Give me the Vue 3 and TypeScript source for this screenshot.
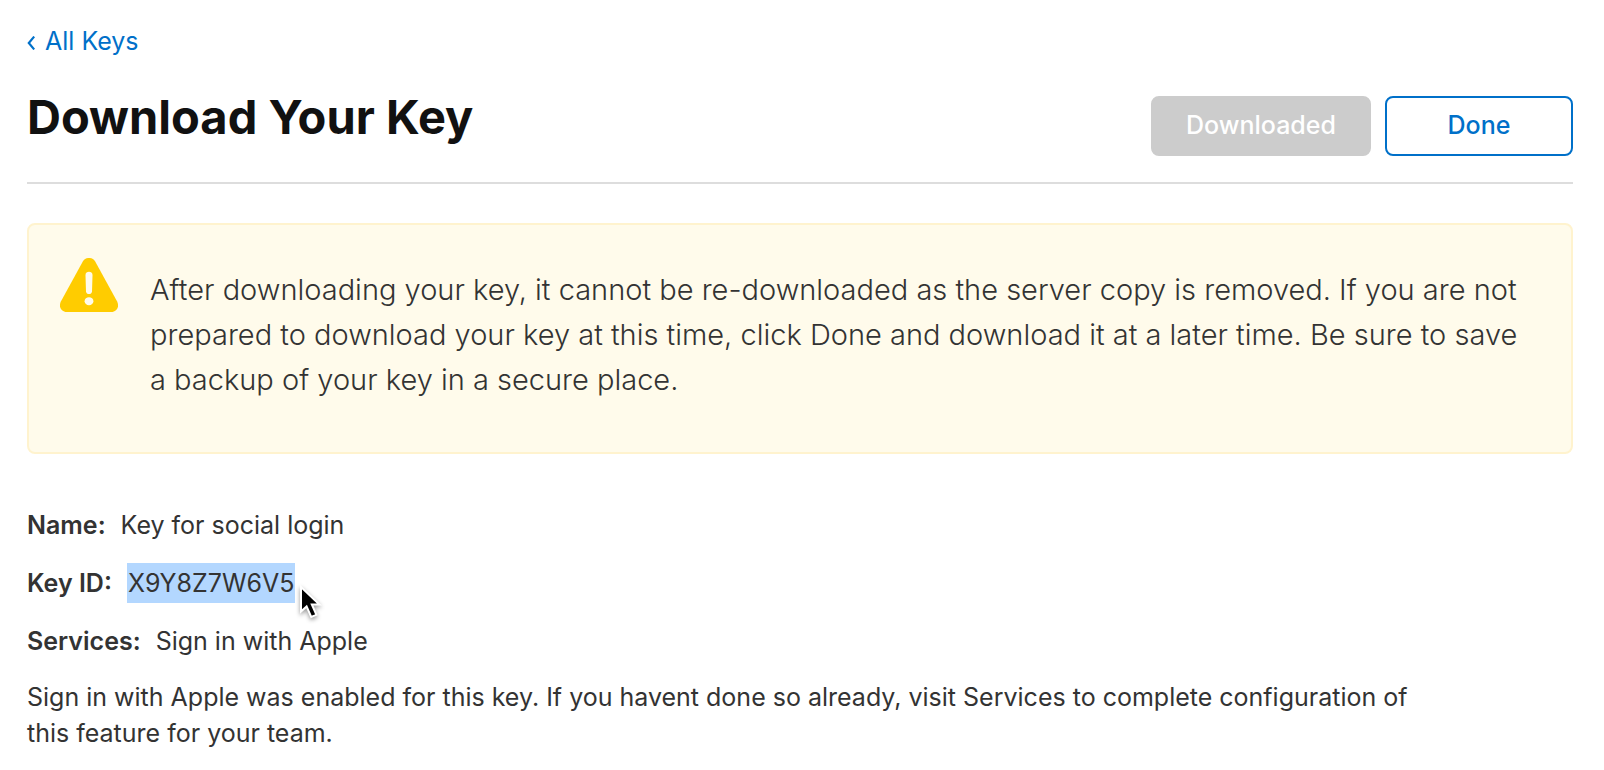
<script setup lang="ts">
interface Detail {
  label: string
  value: string
  selected?: boolean
}

const details: Detail[] = [
  { label: 'Name:', value: 'Key for social login' },
  { label: 'Key ID:', value: 'X9Y8Z7W6V5', selected: true },
  { label: 'Services:', value: 'Sign in with Apple' },
]
</script>

<template>
  <main class="page">
    <a class="back" href="#keys">
      <svg class="chevron" viewBox="0 0 8 14" aria-hidden="true">
        <path d="M7.2 0.6 L1.8 7 L7.2 13.4" />
      </svg>
      All Keys
    </a>

    <header class="header">
      <h1 class="title">Download Your Key</h1>
      <div class="actions">
        <button class="button button-disabled" type="button" disabled>Downloaded</button>
        <button class="button button-done" type="button">Done</button>
      </div>
    </header>

    <section class="alert" role="alert">
      <svg class="warning" viewBox="0 0 58 54" aria-hidden="true">
        <path
          class="warning-shape"
          d="M22.8 3.4 C25.6 -1.2 32.4 -1.2 35.2 3.4 L57 43.2 C59.8 48.4 56.8 54 51.2 54 H6.8 C1.2 54 -1.8 48.4 1 43.2 Z"
        />
        <path class="warning-mark" d="M25.5 17 C25.4 12.8 32.6 12.8 32.5 17 L32 33.4 C31.8 36.8 26.2 36.8 26 33.4 Z" />
        <ellipse class="warning-mark" cx="29" cy="43.2" rx="4.4" ry="4" />
      </svg>
      <p class="alert-text">
        After downloading your key, it cannot be re-downloaded as the server copy is removed. If you
        are not prepared to download your key at this time, click Done and download it at a later
        time. Be sure to save a backup of your key in a secure place.
      </p>
    </section>

    <dl class="details">
      <div v-for="detail in details" :key="detail.label" class="detail">
        <dt class="label">{{ detail.label }}</dt>
        <dd class="value">
          <span :class="{ selected: detail.selected }">{{ detail.value }}</span>
          <svg v-if="detail.selected" class="cursor" viewBox="0 0 26 36" aria-hidden="true">
            <path d="M4 3 V27.5 L9.6 22.4 L14.2 33 L19.4 30.8 L14.8 20.4 H22.4 Z" />
          </svg>
        </dd>
      </div>
    </dl>

    <p class="note">
      Sign in with Apple was enabled for this key. If you havent done so already, visit Services to
      complete configuration of this feature for your team.
    </p>
  </main>
</template>

<style>
body {
  margin: 0;
  background: #fff;
}
</style>

<style scoped>
.page {
  padding: 23px 31px 0 27px;
  color: #333;
  font-family: Inter, 'Liberation Sans', sans-serif;
  font-size: 25px;
  line-height: 36px;
}

.back {
  display: inline-flex;
  align-items: center;
  gap: 10px;
  color: #0070c9;
  text-decoration: none;
}

.chevron {
  width: 8px;
  height: 14px;
  margin-top: 4px;
  fill: none;
  stroke: currentColor;
  stroke-width: 2.2;
}

.header {
  display: flex;
  justify-content: space-between;
  align-items: flex-start;
  margin-top: 29px;
  padding-bottom: 26px;
  border-bottom: 2px solid #ddd;
}

.title {
  margin: 0;
  color: #111;
  font-size: 47px;
  font-weight: 700;
  line-height: 58px;
}

.actions {
  display: flex;
  gap: 14px;
  padding-top: 8px;
}

.title,
.actions {
  flex: none;
}

.button {
  box-sizing: border-box;
  height: 60px;
  padding: 0 0 2px;
  border: 2px solid #0070c9;
  border-radius: 8px;
  background: #fff;
  color: #0070c9;
  font: inherit;
  font-weight: 500;
}

.button-disabled {
  width: 220px;
  border-color: #ccc;
  background: #ccc;
  color: #fff;
}

.button-done {
  width: 188px;
}

.alert {
  display: flex;
  align-items: flex-start;
  gap: 32px;
  margin-top: 39px;
  padding: 33px 40px 50px 31px;
  border: 2px solid #fff3ce;
  border-radius: 8px;
  background: #fffbeb;
}

.warning {
  flex: none;
  width: 58px;
  height: 54px;
}

.warning-shape {
  fill: #fc0;
}

.warning-mark {
  fill: #fffbeb;
}

.alert-text {
  margin: 9px 0 0;
  font-size: 29px;
  font-weight: 300;
  line-height: 45px;
}

.details {
  display: grid;
  gap: 22px;
  margin: 53px 0 0;
}

.detail {
  display: flex;
  gap: 15px;
}

.label {
  font-weight: 600;
}

.value {
  position: relative;
  margin: 0;
}

.selected {
  padding: 5px 1px;
  background: #b3d7ff;
}

.cursor {
  position: absolute;
  top: 19px;
  left: 100%;
  width: 26px;
  height: 36px;
  margin-left: 2px;
  fill: #000;
  stroke: #fff;
  stroke-width: 2;
  filter: drop-shadow(0 2px 2px rgb(0 0 0 / 40%));
}

.note {
  max-width: 1400px;
  margin: 20px 0 0;
}
</style>
